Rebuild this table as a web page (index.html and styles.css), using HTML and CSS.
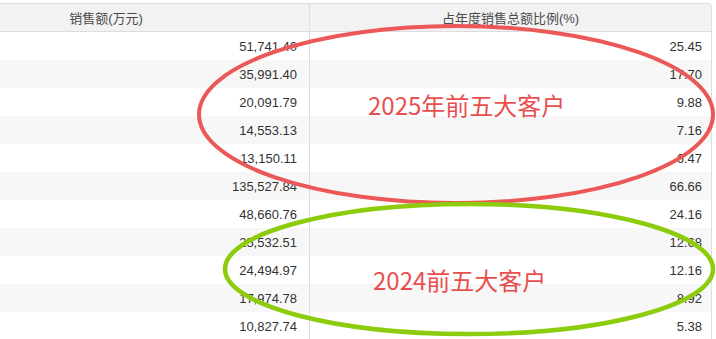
FILE: index.html
```html
<!DOCTYPE html>
<html lang="zh-CN">
<head>
<meta charset="utf-8">
<title>前五大客户销售额</title>
<link rel="stylesheet" href="styles.css">
</head>
<body>
<div class="page">
  <div class="table">
    <div class="head">
      <div class="c1 h1">销售额(万元)</div>
      <div class="c2 h2">占年度销售总额比例(%)</div>
    </div>
    <div class="row"><div class="c1">51,741.40</div><div class="c2">25.45</div></div>
    <div class="row alt"><div class="c1">35,991.40</div><div class="c2">17.70</div></div>
    <div class="row"><div class="c1">20,091.79</div><div class="c2">9.88</div></div>
    <div class="row alt"><div class="c1">14,553.13</div><div class="c2">7.16</div></div>
    <div class="row"><div class="c1">13,150.11</div><div class="c2">6.47</div></div>
    <div class="row alt"><div class="c1">135,527.84</div><div class="c2">66.66</div></div>
    <div class="row"><div class="c1">48,660.76</div><div class="c2">24.16</div></div>
    <div class="row alt"><div class="c1">25,532.51</div><div class="c2">12.68</div></div>
    <div class="row"><div class="c1">24,494.97</div><div class="c2">12.16</div></div>
    <div class="row alt"><div class="c1">17,974.78</div><div class="c2">8.92</div></div>
    <div class="row"><div class="c1">10,827.74</div><div class="c2">5.38</div></div>
  </div>

  <svg class="marks" width="716" height="339" viewBox="0 0 716 339" xmlns="http://www.w3.org/2000/svg">
    <ellipse cx="456" cy="114.5" rx="257" ry="88.5" fill="none" stroke="#ec5757" stroke-width="4"/>
    <ellipse cx="469" cy="269" rx="244" ry="65" fill="none" stroke="#8ccc0c" stroke-width="4.5"/>
  </svg>
  <div class="label label-2025">2025年前五大客户</div>
  <div class="label label-2024">2024前五大客户</div>
</div>
</body>
</html>
```

FILE: styles.css
```css
html, body {
  margin: 0;
  padding: 0;
  background: #ffffff;
}

.page {
  position: relative;
  width: 716px;
  height: 339px;
  overflow: hidden;
  padding-top: 3px;
  box-sizing: border-box;
  font-family: "Liberation Sans", "Noto Sans CJK SC", Arial, sans-serif;
  font-size: 13px;
  color: #333333;
}

.table {
  width: 712px;
  box-sizing: border-box;
  border-top: 1px solid #dddddd;
  border-right: 1px solid #dddddd;
  border-top-right-radius: 4px;
  overflow: hidden;
}

.head {
  display: flex;
  height: 28px;
  box-sizing: border-box;
  background: #f2f2f2;
  border-bottom: 1px solid #dddddd;
  color: #4a4a4a;
}

.row {
  display: flex;
  height: 28px;
  background: #ffffff;
}

.row.alt {
  background: #f7f7f7;
}

.c1,
.c2 {
  display: flex;
  align-items: center;
  justify-content: flex-end;
  box-sizing: border-box;
  white-space: nowrap;
}

.c1 {
  width: 310px;
  border-right: 1px solid #dddddd;
  padding-right: 12px;
}

.c2 {
  flex: 1;
  padding-right: 9px;
}

.h1 {
  justify-content: center;
  padding-right: 97px;
}

.h2 {
  justify-content: center;
  padding-right: 0;
}

.marks {
  position: absolute;
  left: 0;
  top: 0;
  pointer-events: none;
}

.label {
  position: absolute;
  font-family: "Noto Sans CJK SC", "Liberation Sans", sans-serif;
  font-size: 24px;
  line-height: 24px;
  color: #e94f4f;
  white-space: nowrap;
}

.label-2025 {
  left: 368px;
  top: 93px;
}

.label-2024 {
  left: 373px;
  top: 268px;
}
```
